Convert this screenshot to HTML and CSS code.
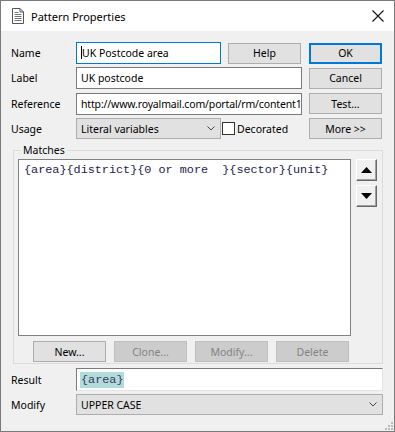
FILE: index.html
```html
<!DOCTYPE html>
<html lang="en">
<head>
  <meta charset="UTF-8" />
  <title>Pattern Properties</title>
  <link rel="stylesheet" href="styles.css">
</head>
<body>

<div class="window">
  <div class="titlebar">
    <svg class="app-icon" width="12" height="16" viewBox="0 0 12 16">
      <path d="M0.5 0.5 H8 L11.5 4 V15.5 H0.5 Z" fill="#fff" stroke="#555" />
      <path d="M8 0.5 V4 H11.5" fill="none" stroke="#555" />
      <path d="M2.5 6.5 H9.5 M2.5 8.5 H9.5 M2.5 10.5 H9.5 M2.5 12.5 H9.5 M2.5 4.5 H6.5" stroke="#777" />
    </svg>
    <span class="title">Pattern Properties</span>
    <svg class="close" width="12" height="12" viewBox="0 0 12 12">
      <path d="M0.5 0.5 L11.5 11.5 M11.5 0.5 L0.5 11.5" stroke="#111" stroke-width="1.1" />
    </svg>
  </div>

  <div class="content">
    <div class="form-grid">
      <label class="lbl">Name</label>
      <div class="field focused"><span class="caret"></span>UK Postcode area</div>
      <button class="btn help">Help</button>
      <button class="btn side default">OK</button>

      <label class="lbl">Label</label>
      <div class="field wide">UK postcode</div>
      <button class="btn side">Cancel</button>

      <label class="lbl">Reference</label>
      <div class="field wide url">http://www.royalmail.com/portal/rm/content1</div>
      <button class="btn side">Test...</button>

      <label class="lbl">Usage</label>
      <div class="combo">
        <span>Literal variables</span>
        <svg class="chevron" width="8" height="5" viewBox="0 0 8 5"><path d="M0.5 0.5 L4 4 L7.5 0.5" fill="none" stroke="#444" /></svg>
      </div>
      <div class="check-row"><span class="checkbox"></span>Decorated</div>
      <button class="btn side">More &gt;&gt;</button>
    </div>

    <fieldset class="matches">
      <legend>Matches</legend>
      <div class="matches-body">
        <div class="code-box">{area}{district}{0 or more  }{sector}{unit}</div>
        <div class="arrows">
          <button class="arrow-btn"><svg width="11" height="6" viewBox="0 0 11 6"><path d="M5.5 0 L11 6 H0 Z" fill="#000" /></svg></button>
          <button class="arrow-btn"><svg width="11" height="6" viewBox="0 0 11 6"><path d="M0 0 H11 L5.5 6 Z" fill="#000" /></svg></button>
        </div>
      </div>
      <div class="match-buttons">
        <button class="btn">New...</button>
        <button class="btn disabled">Clone...</button>
        <button class="btn disabled">Modify...</button>
        <button class="btn disabled">Delete</button>
      </div>
    </fieldset>

    <div class="bottom-grid">
      <label class="lbl">Result</label>
      <div class="field result"><span class="token">{area}</span></div>
      <label class="lbl">Modify</label>
      <div class="combo">
        <span>UPPER CASE</span>
        <svg class="chevron" width="8" height="5" viewBox="0 0 8 5"><path d="M0.5 0.5 L4 4 L7.5 0.5" fill="none" stroke="#444" /></svg>
      </div>
    </div>
  </div>

  <svg class="grip" width="8" height="8" viewBox="0 0 8 8">
    <rect x="6" y="0" width="2" height="2" fill="#bbb" />
    <rect x="3" y="3" width="2" height="2" fill="#bbb" />
    <rect x="6" y="3" width="2" height="2" fill="#bbb" />
    <rect x="0" y="6" width="2" height="2" fill="#bbb" />
    <rect x="3" y="6" width="2" height="2" fill="#bbb" />
    <rect x="6" y="6" width="2" height="2" fill="#bbb" />
  </svg>
</div>

</body>
</html>
```

FILE: styles.css
```css
body {
  margin: 0;
  font-family: "Noto Sans", "Liberation Sans", sans-serif;
  font-size: 10.5px;
  color: #000;
  background: #f0f0f0;
}

.window {
  position: relative;
  width: 395px;
  height: 432px;
  box-sizing: border-box;
  border: 1px solid #7a7a7a;
  background: #f0f0f0;
  overflow: hidden;
}

.titlebar {
  height: 30px;
  background: #fff;
  display: flex;
  align-items: center;
  padding-left: 11px;
}

.app-icon {
  margin-right: 7px;
}

.title {
  font-size: 11px;
  flex: 1;
}

.close {
  margin-right: 10px;
}

.content {
  padding: 11px 0 0 10px;
}

.form-grid {
  display: grid;
  grid-template-columns: 65px 145px 7px 73px 8px 73px;
  grid-template-rows: 22px 22px 23px 21px;
  row-gap: 3px;
  align-items: center;
}

.lbl {
  grid-column: 1;
}

.field {
  grid-column: 2;
  height: 22px;
  box-sizing: border-box;
  background: #fff;
  border: 1px solid #7a7a7a;
  padding: 0 4px;
  line-height: 20px;
  white-space: nowrap;
  overflow: hidden;
}

.field.wide {
  grid-column: 2 / 5;
  width: 226px;
}

/* url is wider than the box, squeeze it a bit like the original */
.field.url {
  letter-spacing: -0.15px;
  padding-right: 2px;
}

.field.focused {
  border-color: #0078d7;
}

.caret {
  display: inline-block;
  width: 1px;
  height: 13px;
  background: #000;
  vertical-align: -2px;
}

.btn {
  font-family: inherit;
  font-size: 10.5px;
  height: 21px;
  box-sizing: border-box;
  background: #e1e1e1;
  border: 1px solid #adadad;
  color: #000;
  padding: 0;
  width: 73px;
}

.help {
  grid-column: 4;
}

.side {
  grid-column: 6;
}

.default {
  border: 2px solid #0078d7;
}

.btn.disabled {
  background: #cccccc;
  border-color: #bfbfbf;
  color: #838383;
}

.combo {
  grid-column: 2;
  height: 21px;
  box-sizing: border-box;
  background: #e1e1e1;
  border: 1px solid #adadad;
  display: flex;
  align-items: center;
  justify-content: space-between;
  padding: 0 5px 0 4px;
}

.check-row {
  grid-column: 3 / 6;
  display: flex;
  align-items: center;
  margin-left: 1px;
}

.checkbox {
  width: 13px;
  height: 13px;
  box-sizing: border-box;
  border: 1px solid #333;
  background: #fff;
  margin-right: 2px;
}

.matches {
  margin: 5px 0 0 2px;
  width: 369px;
  box-sizing: border-box;
  border: 1px solid #dcdcdc;
  padding: 2px 5px 1px 4px;
}

.matches legend {
  padding: 0 2px;
  margin-left: 3px;
  line-height: 13px;
}

.matches-body {
  display: flex;
  gap: 5px;
}

.code-box {
  width: 333px;
  height: 177px;
  flex: none;
  box-sizing: border-box;
  background: #fff;
  border: 1px solid #828282;
  font-family: "Liberation Mono", monospace;
  font-size: 11.8px;
  color: #1c1c50;
  padding: 3px 5px;
  white-space: pre;
}

.arrows {
  display: flex;
  flex-direction: column;
  gap: 4px;
}

.arrow-btn {
  width: 21px;
  height: 22px;
  box-sizing: border-box;
  background: #f0f0f0;
  border: 1px solid;
  border-color: #fff #696969 #696969 #fff;
  box-shadow: inset -1px -1px 0 #a0a0a0;
  padding: 0;
  display: flex;
  align-items: center;
  justify-content: center;
}

.match-buttons {
  display: flex;
  gap: 8px;
  margin: 5px 0 0 15px;
}

.bottom-grid {
  display: grid;
  grid-template-columns: 65px 307px;
  grid-template-rows: 23px 21px;
  row-gap: 3px;
  align-items: center;
  margin-top: 4px;
}

.field.result {
  height: 23px;
  line-height: 21px;
  padding-left: 3px;
  border-color: #7a7a7a #e3e3e3 #e3e3e3 #7a7a7a;
}

.token {
  display: inline-block;
  font-family: "Liberation Mono", monospace;
  font-size: 11.8px;
  line-height: 16px;
  vertical-align: middle;
  background: #b1dcdb;
  color: #3a3a5a;
  padding: 0 1px;
}

.grip {
  position: absolute;
  right: 1px;
  bottom: 1px;
}
```
